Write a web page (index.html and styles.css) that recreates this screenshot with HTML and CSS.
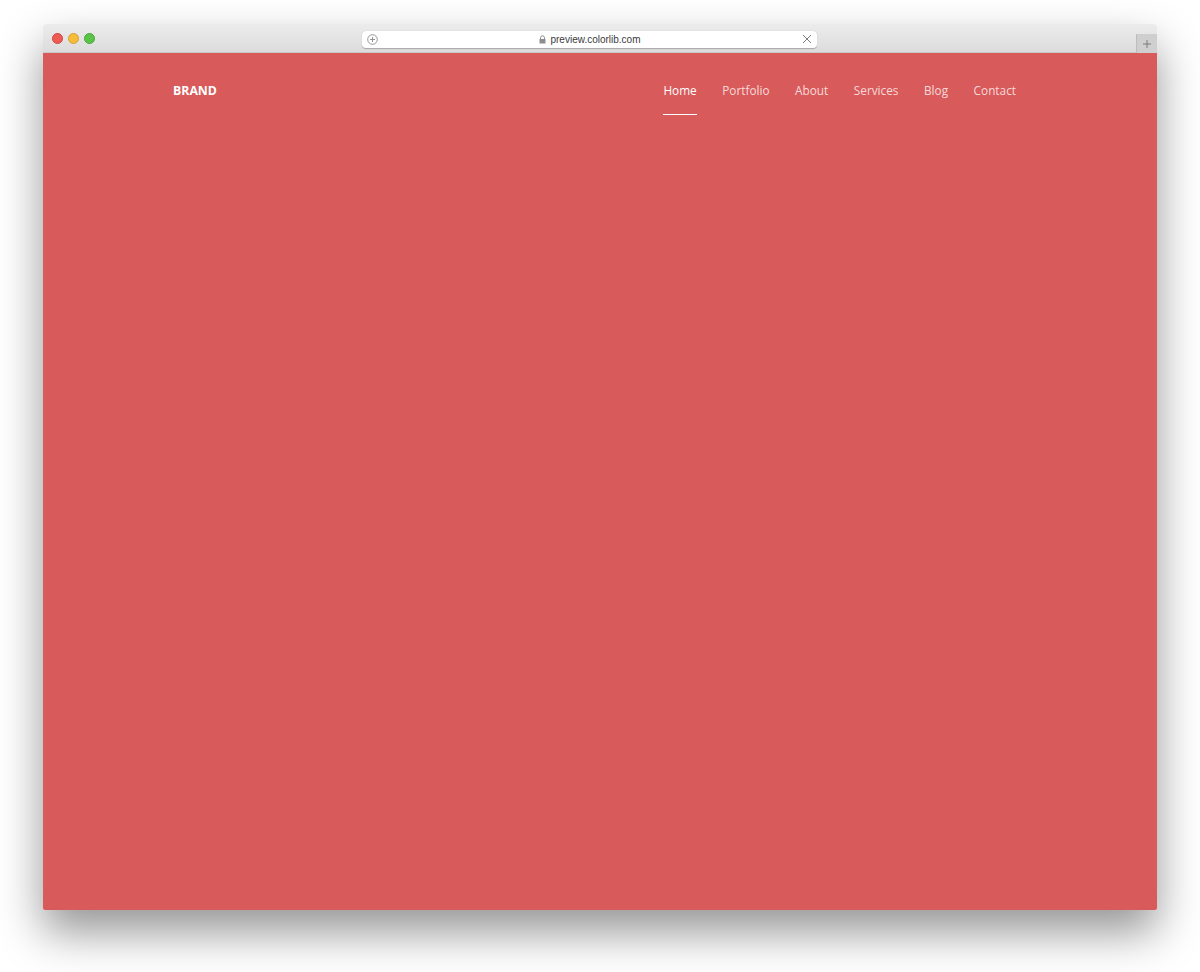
FILE: index.html
```html
<!DOCTYPE html>
<html>
<head>
<meta charset="utf-8">
<link rel="stylesheet" href="styles.css">
</head>
<body>
<div class="window">
  <div class="toolbar">
    <div class="lights">
      <span class="light red"></span>
      <span class="light yellow"></span>
      <span class="light green"></span>
    </div>
    <div class="address">
      <svg class="addr-plus" width="11" height="11" viewBox="0 0 11 11"><circle cx="5.5" cy="5.5" r="4.8" fill="none" stroke="#8a8a8a" stroke-width="0.9"/><path d="M5.5 3v5M3 5.5h5" stroke="#8a8a8a" stroke-width="0.9"/></svg>
      <div class="url">
        <svg width="7" height="9" viewBox="0 0 7 9"><path d="M1.5 4V2.8a2 2 0 0 1 4 0V4" fill="none" stroke="#8d8d8d" stroke-width="1"/><rect x="0.5" y="4" width="6" height="4.5" rx="0.6" fill="#8d8d8d"/></svg>
        <span>preview.colorlib.com</span>
      </div>
      <svg class="addr-close" width="10" height="10" viewBox="0 0 10 10"><path d="M1 1l8 8M9 1l-8 8" stroke="#7a7a7a" stroke-width="1"/></svg>
    </div>
    <div class="newtab">
      <svg width="10" height="10" viewBox="0 0 10 10"><path d="M5 1v8M1 5h8" stroke="#7a7a7a" stroke-width="1"/></svg>
    </div>
  </div>
  <div class="page">
    <header class="nav">
      <a class="brand" href="#">BRAND</a>
      <nav class="menu">
        <a class="active" href="#">Home</a>
        <a href="#">Portfolio</a>
        <a href="#">About</a>
        <a href="#">Services</a>
        <a href="#">Blog</a>
        <a href="#">Contact</a>
      </nav>
    </header>
  </div>
</div>
</body>
</html>
```
FILE: styles.css
```css
html, body {
  margin: 0;
  padding: 0;
  background: #ffffff;
}
body {
  width: 1200px;
  height: 972px;
  overflow: hidden;
  font-family: "Open Sans", "Liberation Sans", sans-serif;
}
.window {
  margin: 24px 0 0 43px;
  width: 1114px;
  height: 886px;
  border-radius: 4px 4px 2px 2px;
  overflow: hidden;
  box-shadow: 0 22px 45px rgba(0,0,0,0.42);
  display: flex;
  flex-direction: column;
}
.toolbar {
  height: 29px;
  background: linear-gradient(#ececec, #dcdcdc);
  border-bottom: 1px solid #c9c9c9;
  box-sizing: border-box;
  display: flex;
  align-items: center;
  position: relative;
  flex: none;
}
.lights {
  display: flex;
  gap: 5px;
  padding-left: 9px;
  margin-top: 1px;
}
.light {
  width: 11px;
  height: 11px;
  border-radius: 50%;
  box-sizing: border-box;
}
.red { background: #ee5b54; border: 0.5px solid #d7443e; }
.yellow { background: #f5bd3a; border: 0.5px solid #dba12b; }
.green { background: #5ac348; border: 0.5px solid #46a934; }
.address {
  margin-left: 267px;
  width: 455px;
  height: 17px;
  background: #ffffff;
  border-radius: 4px;
  box-shadow: 0 0.5px 1px rgba(0,0,0,0.25);
  display: flex;
  align-items: center;
  padding: 0 5px;
  box-sizing: border-box;
  margin-top: 2px;
}
.url {
  flex: 1;
  display: flex;
  align-items: center;
  justify-content: center;
  gap: 4px;
  font-size: 10px;
  color: #3a3a3a;
  font-family: "Liberation Sans", "Open Sans", sans-serif;
}
.newtab {
  position: absolute;
  right: 0;
  bottom: -1px;
  width: 20px;
  height: 19px;
  background: #cfcfcf;
  border-left: 1px solid #bdbdbd;
  display: flex;
  align-items: center;
  justify-content: center;
}
.page {
  flex: 1;
  background: #d95a5a;
}
.nav {
  display: flex;
  justify-content: space-between;
  align-items: flex-start;
  padding: 29px 141px 0 130px;
}
.brand {
  color: #ffffff;
  font-weight: 700;
  font-size: 12.3px;
  text-decoration: none;
  line-height: 18px;
}
.menu {
  display: flex;
  gap: 25.5px;
}
.menu a {
  color: rgba(255,255,255,0.78);
  font-size: 11.8px;
  text-decoration: none;
  line-height: 16px;
  padding-bottom: 16px;
  border-bottom: 1px solid transparent;
}
.menu a.active {
  color: #ffffff;
  border-bottom-color: #ffffff;
}
```
